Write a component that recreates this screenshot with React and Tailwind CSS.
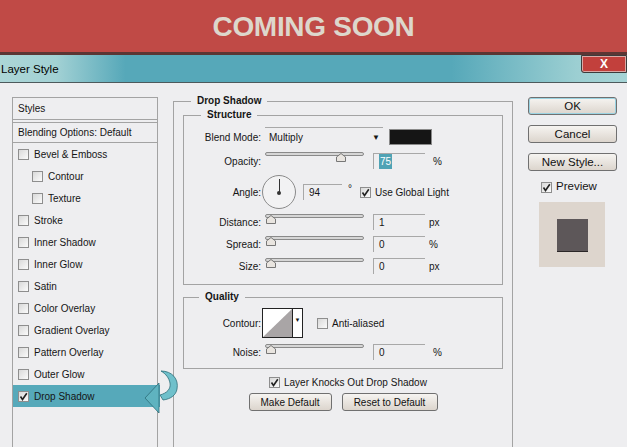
const Check = ({ checked = false }) => (
  <span className="inline-flex w-[11px] h-[11px] shrink-0 items-center justify-center border border-[#8e8e8e] bg-gradient-to-br from-[#d9d9d9] to-[#fbfbfb]">
    {checked && (
      <svg width="9" height="9" viewBox="0 0 9 9">
        <path d="M1.5 4.5 L3.5 7.5 L7.8 1.2" fill="none" stroke="#222" strokeWidth="1.6" />
      </svg>
    )}
  </span>
);

const Slider = ({ pos = 1 }) => (
  <div className="relative w-[99px] h-[14px] ml-[4px] self-start mt-[1px]">
    <div className="absolute left-0 right-0 top-[2px] h-[4px] rounded-full border border-[#8a8a8a] bg-[#d6d6d6]" />
    <svg className="absolute top-[3px]" style={{ left: pos }} width="10" height="9" viewBox="0 0 10 9">
      <path d="M5 0.5 L9.5 4 L9.5 8.5 L0.5 8.5 L0.5 4 Z" fill="#e9e5e0" stroke="#777" />
    </svg>
  </div>
);

const NumBox = ({ value, w = "w-[52px]", ml = "ml-[9px]", highlight = false }) => (
  <div className={`${w} ${ml} h-[16px] flex items-center border-t border-l border-[#a8a8a8] pl-[5px]`}>
    {highlight ? <span className="bg-[#4fa3b5] text-white px-[1px]">{value}</span> : value}
  </div>
);

const Label = ({ children }) => (
  <div className="w-[77px] shrink-0 text-right">{children}</div>
);

const items = [
  ["Bevel & Emboss", false],
  ["Contour", true],
  ["Texture", true],
  ["Stroke", false],
  ["Inner Shadow", false],
  ["Inner Glow", false],
  ["Satin", false],
  ["Color Overlay", false],
  ["Gradient Overlay", false],
  ["Pattern Overlay", false],
  ["Outer Glow", false],
];

const Btn = ({ children, className = "" }) => (
  <button className={`h-[18px] rounded-[3px] border border-[#707070] bg-gradient-to-b from-[#f6f4f1] to-[#dcd5cd] text-[#111] ${className}`}>
    {children}
  </button>
);

export default function App() {
  return (
    <div className="w-[627px] h-[447px] overflow-hidden bg-[#eeeef0] text-[10px] text-[#151515] font-['Liberation_Sans',Arial,sans-serif]">
      {/* banner */}
      <div className="h-[55px] bg-[#c04a46] border-b-[3px] border-[#5b3634] flex items-center justify-center pt-[1px]">
        <span className="text-[28px] font-bold text-[#ddd7cc] tracking-[-0.3px]">COMING SOON</span>
      </div>

      {/* title bar */}
      <div className="h-[28px] flex items-start justify-between border-b border-[#4d5a5c] bg-[linear-gradient(to_right,#acd6d7_0%,#a2d1d4_9%,#56a8b9_20%,#56a8b9_72%,#9ccfd2_92%,#a6d4d6_100%)]">
        <span className="text-[11.5px] text-black pl-[1px] pt-[6px]">Layer Style</span>
        <div className="w-[46px] h-[18px] border border-[#3c3c3c] rounded-bl-[3px] bg-[#c2403c] shadow-[inset_0_0_0_1px_#d9a9a6] flex items-center justify-center">
          <span className="text-white font-bold text-[12px] leading-none">X</span>
        </div>
      </div>

      {/* body */}
      <div className="flex items-stretch h-[364px] pt-[14px]">
        {/* styles list */}
        <div className="ml-[12px] w-[146px] border-t border-x border-[#a3a3a3] flex flex-col">
          <div className="h-[21px] flex items-center pl-[5px]">Styles</div>
          <div className="h-[4px] border-y border-[#a3a3a3]" />
          <div className="h-[20px] flex items-center pl-[5px] border-b border-[#a3a3a3]">Blending Options: Default</div>
          {items.map(([name, indent]) => (
            <div key={name} className={`h-[22px] flex items-center gap-[5px] ${indent ? "pl-[19px]" : "pl-[5px]"}`}>
              <Check />
              <span>{name}</span>
            </div>
          ))}
          <div className="relative h-[22px] flex items-center gap-[5px] pl-[5px] bg-[#56a9ba] -mr-[3px]">
            <Check checked />
            <span>Drop Shadow</span>
            <svg className="absolute left-[129px] top-[-16px]" width="40" height="46" viewBox="0 0 40 46">
              <path d="M19 2 C30 2 37 10 35 20 C34 26 29 30 21 31 L18 26 C25 24 29 20 28 14 C27 9 24 5 19 2 Z" fill="#6fc0cb" stroke="#2d6d78" strokeWidth="0.8" />
              <path d="M3 29 L17 14 L17 44 Z" fill="#5fb3c0" stroke="#2d6d78" strokeWidth="0.8" />
            </svg>
          </div>
        </div>

        {/* center */}
        <fieldset className="ml-[15px] w-[340px] -mt-[3px] border border-b-0 border-[#a3a3a3] p-0 min-w-0">
          <legend className="ml-[17px] px-[6px] font-bold leading-[14px]">Drop Shadow</legend>

          <fieldset className="mx-[9px] border border-[#a3a3a3] p-0 pb-[7px] min-w-0">
            <legend className="ml-[17px] px-[6px] font-bold leading-[14px]">Structure</legend>
            <div className="mt-[3px] h-[24px] flex items-center">
              <Label>Blend Mode:</Label>
              <div className="ml-[4px] w-[118px] h-[20px] border-t border-[#a8a8a8] flex items-center justify-between pl-[4px] pr-[3px]">
                <span>Multiply</span>
                <span className="text-[8px]">▼</span>
              </div>
              <div className="ml-[6px] w-[43px] h-[16px] bg-[#151515] border border-[#8a8a8a]" />
            </div>
            <div className="h-[24px] flex items-center">
              <Label>Opacity:</Label>
              <Slider pos={71} />
              <NumBox value="75" highlight />
              <span className="ml-[8px]">%</span>
            </div>
            <div className="h-[38px] flex items-center">
              <Label>Angle:</Label>
              <div className="relative ml-[1px] w-[34px] h-[34px] rounded-full border border-[#8a8a8a] bg-[#f2f2f3]">
                <div className="absolute left-[15.5px] top-[3px] w-[1px] h-[13px] bg-[#333]" />
                <div className="absolute left-[14px] top-[14.5px] w-[4px] h-[4px] rounded-full bg-[#333]" />
              </div>
              <NumBox value="94" w="w-[39px]" ml="ml-[7px]" />
              <span className="ml-[6px] self-start mt-[8px]">°</span>
              <div className="ml-[8px] flex items-center gap-[4px]">
                <Check checked />
                <span>Use Global Light</span>
              </div>
            </div>
            {[
              ["Distance:", "1", "px"],
              ["Spread:", "0", "%"],
              ["Size:", "0", "px"],
            ].map(([l, v, u]) => (
              <div key={l} className="h-[22px] flex items-center">
                <Label>{l}</Label>
                <Slider pos={1} />
                <NumBox value={v} />
                <span className="ml-[4px]">{u}</span>
              </div>
            ))}
          </fieldset>

          <fieldset className="mt-[5px] mx-[9px] border border-[#a3a3a3] p-0 pb-[5px] min-w-0">
            <legend className="ml-[15px] px-[6px] font-bold leading-[14px]">Quality</legend>
            <div className="mt-[3px] h-[32px] flex items-center">
              <Label>Contour:</Label>
              <div className="ml-[1px] w-[41px] h-[30px] border border-[#222] bg-white flex">
                <svg width="29" height="28" viewBox="0 0 29 28">
                  <path d="M0 28 L29 0 L29 28 Z" fill="#a9a5a6" />
                </svg>
                <div className="flex-1 border-l border-[#222] flex items-start justify-center pt-[8px]">
                  <span className="text-[6px] leading-none">▼</span>
                </div>
              </div>
              <div className="ml-[14px] flex items-center gap-[4px]">
                <Check />
                <span>Anti-aliased</span>
              </div>
            </div>
            <div className="mt-[2px] h-[22px] flex items-center">
              <Label>Noise:</Label>
              <Slider pos={1} />
              <NumBox value="0" />
              <span className="ml-[8px]">%</span>
            </div>
          </fieldset>

          <div className="mt-[3px] h-[20px] flex items-center gap-[4px] ml-[95px]">
            <Check checked />
            <span>Layer Knocks Out Drop Shadow</span>
          </div>
          <div className="mt-[1px] flex justify-center gap-[10px]">
            <Btn className="w-[83px]">Make Default</Btn>
            <Btn className="w-[96px]">Reset to Default</Btn>
          </div>
        </fieldset>

        {/* right column */}
        <div className="ml-[15px] w-[89px] flex flex-col text-[11.5px]">
          <Btn className="w-[89px] border-[#3c96b0] shadow-[inset_0_0_0_1px_#9ad3e2]">OK</Btn>
          <Btn className="w-[89px] mt-[10px]">Cancel</Btn>
          <Btn className="w-[89px] mt-[10px]">New Style...</Btn>
          <div className="mt-[8px] h-[16px] flex items-center gap-[4px] ml-[13px]">
            <Check checked />
            <span>Preview</span>
          </div>
          <div className="mt-[7px] ml-[11px] w-[66px] h-[65px] bg-[#ddd5cd] flex items-center justify-center">
            <div className="w-[31px] h-[32px] bg-[#5d5759] shadow-[0_1px_0_#2a2627]" />
          </div>
        </div>
      </div>
    </div>
  );
}
